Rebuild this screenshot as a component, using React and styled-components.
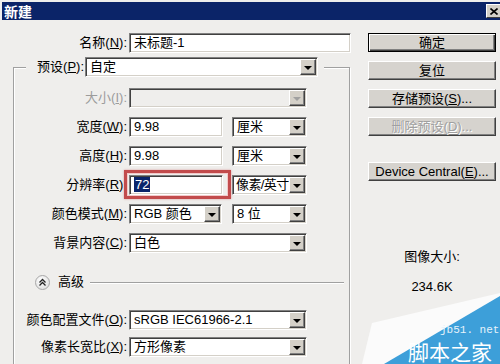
import React from "react";
import styled, { createGlobalStyle, css } from "styled-components";

const GlobalStyle = createGlobalStyle`
  html, body {
    margin: 0;
    padding: 0;
    background: #efeeec;
  }
  body {
    font-family: "Liberation Sans", "Noto Sans CJK SC", sans-serif;
    font-size: 13px;
    color: #000;
  }
`;

const Window = styled.div`
  position: relative;
  width: 500px;
  height: 364px;
  overflow: hidden;
  background: #efeeec;
`;

const TitleBar = styled.div`
  display: flex;
  align-items: center;
  justify-content: space-between;
  height: 18px;
  margin: 2px -4px 0 2px;
  padding-left: 2px;
  background: #0b2468;
  color: #fff;
  font-family: "Noto Sans CJK SC", sans-serif;
  font-weight: bold;
  font-size: 14px;
  line-height: 18px;
`;

const CloseBox = styled.div`
  width: 16px;
  height: 14px;
  margin-right: 2px;
  box-sizing: border-box;
  background: #d4d0c8;
  border: 1px solid;
  border-color: #fff #404040 #404040 #fff;
  display: flex;
  align-items: center;
  justify-content: center;
`;

const Body = styled.div`
  display: flex;
  padding-top: 13px;
`;

const LeftCol = styled.div`
  width: 351px;
  display: flex;
  flex-direction: column;
`;

const RightCol = styled.div`
  width: 128px;
  margin-left: 17px;
  display: flex;
  flex-direction: column;
  gap: 9px;
`;

const Row = styled.div`
  display: flex;
  align-items: center;
  height: 20px;
`;

const Label = styled.div`
  width: ${(p) => p.$w}px;
  flex-shrink: 0;
  margin-right: 2px;
  text-align: right;
  white-space: nowrap;
  line-height: 20px;
  color: ${(p) => (p.$disabled ? "#9c9c9c" : "#000")};
`;

const Field = styled.div`
  position: relative;
  width: ${(p) => p.$w}px;
  height: 20px;
  margin-left: ${(p) => p.$ml || 0}px;
  flex-shrink: 0;
  box-sizing: border-box;
  display: flex;
  align-items: center;
  padding: 0 1px 0 ${(p) => (p.$tight ? 3 : 4)}px;
  background: ${(p) => (p.$disabled ? "#efeeec" : "#fff")};
  border: 1px solid;
  border-color: #808080 #fff #fff #808080;
  box-shadow: inset 1px 1px #404040, inset -1px -1px #d4d0c8;
  white-space: nowrap;
  line-height: 16px;
`;

const FieldText = styled.span`
  flex: 1;
  min-width: 0;
  overflow: hidden;
  letter-spacing: ${(p) => (p.$tight ? "-0.6px" : "normal")};
`;

const Selected = styled.span`
  background: #0a246a;
  color: #fff;
  padding: 0 1px;
`;

const Highlight = styled.div`
  position: relative;
  &::after {
    content: "";
    position: absolute;
    top: -5px;
    left: -5px;
    right: -8px;
    bottom: -4px;
    border: 3px solid #c24b4c;
    box-shadow: 0 0 2px rgba(194, 75, 76, 0.5), inset 0 0 0 1px #f2c9c9;
    pointer-events: none;
  }
`;

const DropBtn = styled.div`
  width: 16px;
  height: 16px;
  flex-shrink: 0;
  box-sizing: border-box;
  background: #d4d0c8;
  border: 1px solid;
  border-color: #fff #404040 #404040 #fff;
  box-shadow: inset -1px -1px #808080;
  display: flex;
  align-items: center;
  justify-content: center;
  &::before {
    content: "";
    width: 0;
    height: 0;
    margin: 1px 1px 0 0;
    border-left: 4px solid transparent;
    border-right: 4px solid transparent;
    border-top: 4px solid ${(p) => (p.$disabled ? "#a0a0a0" : "#000")};
  }
`;

const Group = styled.fieldset`
  margin: 4px 0 0 13px;
  width: 337px;
  box-sizing: border-box;
  border: 1px solid #a0a0a0;
  box-shadow: inset 1px 1px #fff, 1px 1px #fff;
  padding: 11px 0 40px 1px;
  min-width: 0;
`;

const Legend = styled.legend`
  margin-left: 11px;
  padding: 0 6px 0 9px;
  background: #efeeec;
  display: flex;
  align-items: center;
  height: 20px;
  line-height: 20px;
`;

const Stack = styled.div`
  display: flex;
  flex-direction: column;
  gap: ${(p) => p.$gap || 9}px;
  margin-top: ${(p) => p.$mt || 0}px;
`;

const AdvRow = styled.div`
  display: flex;
  align-items: center;
  height: 16px;
  margin-top: 12px;
  padding-left: 20px;
`;

const Toggle = styled.div`
  width: 15px;
  height: 15px;
  box-sizing: border-box;
  border-radius: 50%;
  border: 1px solid #a8a8a8;
  background: radial-gradient(circle at 40% 35%, #ffffff 0%, #e4e4e4 70%, #cfcfcf 100%);
  display: flex;
  align-items: center;
  justify-content: center;
`;

const AdvText = styled.span`
  margin-left: 8px;
  line-height: 16px;
`;

const Rule = styled.div`
  flex: 1;
  height: 0;
  margin: 1px 5px 0 6px;
  border-top: 1px solid #a0a0a0;
  border-bottom: 1px solid #fff;
`;

const Button = styled.div`
  height: 19px;
  box-sizing: border-box;
  background: #d6d3ce;
  display: flex;
  align-items: center;
  justify-content: center;
  white-space: nowrap;
  border: 1px solid;
  border-color: #fff #404040 #404040 #fff;
  box-shadow: inset -1px -1px #808080;
  margin-top: ${(p) => p.$mt || 0}px;
  line-height: 17px;
  ${(p) =>
    p.$default &&
    css`
      border-color: #000;
      box-shadow: inset 1px 1px #fff, inset -1px -1px #404040, inset -2px -2px #808080;
    `}
  ${(p) =>
    p.$disabled &&
    css`
      color: #a0a0a0;
      text-shadow: 1px 1px #fff;
    `}
`;

const Info = styled.div`
  text-align: center;
  line-height: 16px;
  margin-top: ${(p) => p.$mt || 0}px;
`;

const Badge = styled.div`
  position: absolute;
  z-index: 5;
  right: 0;
  bottom: 0;
  width: 140px;
  height: 75px;
  pointer-events: none;
`;

const Wedge = styled.svg`
  position: absolute;
  left: 0;
  top: 0;
  width: 140px;
  height: 75px;
`;

const SiteText = styled.span`
  position: absolute;
  left: 80px;
  top: 35px;
  font-family: "Liberation Mono", monospace;
  font-size: 11px;
  line-height: 12px;
  color: #e6f3fb;
  white-space: nowrap;
`;

const NameText = styled.span`
  position: absolute;
  left: 48px;
  top: 51px;
  font-family: "Noto Sans CJK SC", sans-serif;
  font-size: 21px;
  line-height: 22px;
  color: #ffffff;
  white-space: nowrap;
`;

const Select = ({ w, ml, disabled, tight, children }) => (
  <Field $w={w} $ml={ml} $disabled={disabled} $tight={tight}>
    <FieldText $tight={tight}>{children}</FieldText>
    <DropBtn $disabled={disabled} />
  </Field>
);

const L = ({ text, k, w = 112, disabled }) => (
  <Label $w={w} $disabled={disabled}>
    {text}(<u>{k}</u>):
  </Label>
);

export default function App() {
  return (
    <>
      <GlobalStyle />
      <Window>
        <TitleBar>
          新建
          <CloseBox>
            <svg width="8" height="7" viewBox="0 0 8 7">
              <path d="M0.5 0.5 L7.5 6.5 M7.5 0.5 L0.5 6.5" stroke="#000" strokeWidth="1.6" />
            </svg>
          </CloseBox>
        </TitleBar>
        <Body>
          <LeftCol>
            <Row>
              <L text="名称" k="N" w={127} />
              <Field $w={222}>
                <FieldText>未标题-1</FieldText>
              </Field>
            </Row>
            <Group>
              <Legend>
                <Label $w={49} style={{ marginRight: 1 }}>
                  预设(<u>P</u>):
                </Label>
                <Select w={233}>自定</Select>
              </Legend>
              <Stack>
                <Row>
                  <L text="大小" k="I" disabled />
                  <Select w={178} disabled />
                </Row>
                <Row>
                  <L text="宽度" k="W" />
                  <Field $w={94}>
                    <FieldText>9.98</FieldText>
                  </Field>
                  <Select w={75} ml={9}>厘米</Select>
                </Row>
                <Row>
                  <L text="高度" k="H" />
                  <Field $w={94}>
                    <FieldText>9.98</FieldText>
                  </Field>
                  <Select w={75} ml={9}>厘米</Select>
                </Row>
                <Row>
                  <L text="分辨率" k="R" />
                  <Highlight>
                    <Field $w={94}>
                      <FieldText>
                        <Selected>72</Selected>
                      </FieldText>
                    </Field>
                  </Highlight>
                  <Select w={75} ml={9} tight>像素/英寸</Select>
                </Row>
                <Row>
                  <L text="颜色模式" k="M" />
                  <Select w={93}>RGB 颜色</Select>
                  <Select w={75} ml={10}>8 位</Select>
                </Row>
                <Row>
                  <L text="背景内容" k="C" />
                  <Select w={178}>白色</Select>
                </Row>
                <AdvRow>
                  <Toggle>
                    <svg width="9" height="9" viewBox="0 0 9 9">
                      <path d="M1.5 4.5 L4.5 1.5 L7.5 4.5 M1.5 7.5 L4.5 4.5 L7.5 7.5" fill="none" stroke="#222" strokeWidth="1.3" />
                    </svg>
                  </Toggle>
                  <AdvText>高级</AdvText>
                  <Rule />
                </AdvRow>
                <Stack $gap={7} $mt={11}>
                  <Row>
                    <L text="颜色配置文件" k="O" />
                    <Select w={178}>sRGB IEC61966-2.1</Select>
                  </Row>
                  <Row>
                    <L text="像素长宽比" k="X" />
                    <Select w={178}>方形像素</Select>
                  </Row>
                </Stack>
              </Stack>
            </Group>
          </LeftCol>
          <RightCol>
            <Button $default>确定</Button>
            <Button>复位</Button>
            <Button>
              存储预设(<u>S</u>)...
            </Button>
            <Button $disabled>
              删除预设(<u>D</u>)...
            </Button>
            <Button $mt={17}>
              Device Central(<u>E</u>)...
            </Button>
            <Info $mt={59}>图像大小:</Info>
            <Info $mt={5}>234.6K</Info>
          </RightCol>
        </Body>
        <Badge>
          <Wedge viewBox="0 0 140 75">
            <path d="M12 34 L140 4 L140 10 L26 75 L2 75 Z" fill="#fbfbfb" />
            <path d="M140 7 L140 75 L24 75 Z" fill="#3d9fd9" />
          </Wedge>
          <SiteText>jb51. net</SiteText>
          <NameText>脚本之家</NameText>
        </Badge>
      </Window>
    </>
  );
}
